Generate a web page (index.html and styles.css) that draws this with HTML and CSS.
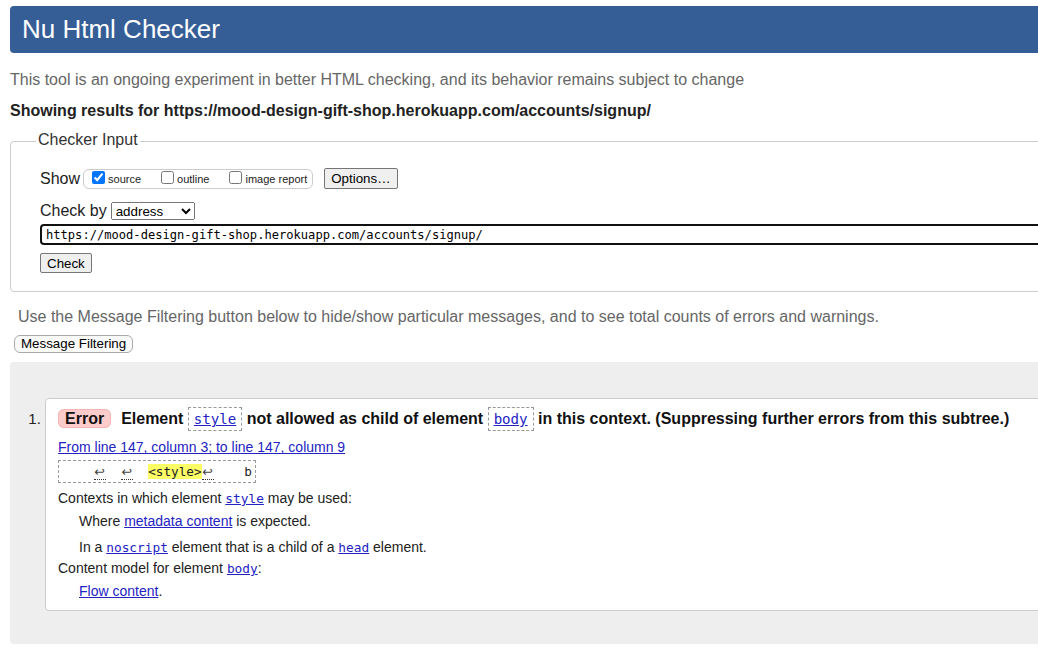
FILE: index.html
```html
<!DOCTYPE html>
<html lang="en">
<head>
<meta charset="utf-8">
<title>Showing results for https://mood-design-gift-shop.herokuapp.com/accounts/signup/ - Nu Html Checker</title>
<link rel="stylesheet" href="styles.css">
</head>
<body>
<div class="page">
  <header class="banner"><h1 class="title">Nu Html Checker</h1></header>
  <p class="intro">This tool is an ongoing experiment in better HTML checking, and its behavior remains subject to change</p>
  <p class="showing">Showing results for https://mood-design-gift-shop.herokuapp.com/accounts/signup/</p>
  <form class="checker-form">
    <fieldset class="checker">
      <legend class="checker-legend">Checker Input</legend>
      <div class="checker-body">
        <div class="show-row">
          <span class="row-label">Show</span>
          <span class="show-options">
            <label class="opt"><input type="checkbox" checked><span class="opt-text">source</span></label>
            <label class="opt"><input type="checkbox"><span class="opt-text">outline</span></label>
            <label class="opt"><input type="checkbox"><span class="opt-text">image report</span></label>
          </span>
          <button type="button" class="btn options-btn">Options…</button>
        </div>
        <div class="by-row">
          <span class="row-label">Check by</span>
          <select class="check-by"><option>address</option></select>
        </div>
        <input class="url" type="url" value="https://mood-design-gift-shop.herokuapp.com/accounts/signup/">
        <button type="button" class="btn check-btn">Check</button>
      </div>
    </fieldset>
  </form>
  <p class="hint">Use the Message Filtering button below to hide/show particular messages, and to see total counts of errors and warnings.</p>
  <div class="filter-wrap"><button type="button" class="filter-btn">Message Filtering</button></div>
  <div class="results">
    <ol class="messages">
      <li class="msg">
        <p class="msg-text"><span class="sev">Error</span>Element <code class="msg-code"><a href="#">style</a></code> not allowed as child of element <code class="msg-code"><a href="#">body</a></code> in this context. (Suppressing further errors from this subtree.)</p>
        <p class="loc"><a href="#">From line 147, column 3; to line 147, column 9</a></p>
        <code class="extract">    <span class="lf">↩</span>  <span class="lf">↩</span>  <b class="hl">&lt;style&gt;</b><span class="lf">↩</span>    b</code>
        <dl class="details">
          <dt>Contexts in which element <a href="#" class="code-link">style</a> may be used:</dt>
          <dd>Where <a href="#">metadata content</a> is expected.</dd>
          <dd>In a <a href="#" class="code-link">noscript</a> element that is a child of a <a href="#" class="code-link">head</a> element.</dd>
          <dt>Content model for element <a href="#" class="code-link">body</a>:</dt>
          <dd><a href="#">Flow content</a>.</dd>
        </dl>
      </li>
    </ol>
  </div>
</div>
</body>
</html>
```
FILE: styles.css
```css
* { box-sizing: border-box; }
html { overflow: hidden; }
body {
  margin: 0;
  font-family: "Liberation Sans", Arial, sans-serif;
  color: #222;
  background: #fff;
}
a { color: #2323c2; text-decoration: underline; }

.page { width: 1100px; padding: 6px 0 0 10px; }

.banner {
  height: 47px;
  background: #365e96;
  border-radius: 4px 0 0 4px;
  padding-left: 12px;
}
.title {
  margin: 0;
  font-size: 26px;
  font-weight: normal;
  line-height: 47px;
  color: #fff;
}

.intro { margin: 17px 0 0; font-size: 16px; line-height: 20px; color: #666; }
.showing { margin: 11px 0 0; font-size: 16px; line-height: 20px; font-weight: bold; color: #222; }

.checker-form { margin: 10px 0 0; }
.checker {
  margin: 0;
  min-width: 0;
  border: 1px solid #ccc;
  border-radius: 4px 0 0 4px;
  padding: 16.3px 0 17.5px 29px;
}
.checker-legend {
  margin-left: -4px;
  padding: 0 2px 3px;
  font-size: 16px;
  line-height: 18px;
  color: #333;
}
.checker-body { display: flex; flex-direction: column; align-items: flex-start; }

.row-label { font-size: 16px; line-height: 18px; color: #222; }
.show-row { display: flex; align-items: center; height: 21px; }
.show-options {
  display: inline-flex;
  align-items: flex-start;
  height: 20px;
  margin-left: 3px;
  padding: 1px 5px 0 4px;
  border: 1px solid #ccc;
  border-radius: 6px;
}
.opt { display: flex; align-items: flex-start; font-size: 11px; line-height: 13px; margin-right: 16px; color: #222; }
.opt:last-child { margin-right: 0; }
.opt input { margin: 0 3px 0 4px; width: 13px; height: 13px; }
.opt-text { padding-top: 2px; }

.btn {
  font-family: "Liberation Sans", Arial, sans-serif;
  font-size: 13.333px;
  line-height: 15px;
  color: #000;
  background: #efefef;
  border: 1px solid #767676;
  border-radius: 2px;
  padding: 0 6px;
}
.options-btn { margin-left: 11px; height: 21px; }

.by-row { display: flex; align-items: center; margin-top: 12.4px; height: 18px; }
.check-by {
  margin-left: 4px;
  width: 84px;
  height: 18px;
  font-family: "Liberation Sans", Arial, sans-serif;
  font-size: 13.333px;
  color: #000;
}

.url {
  align-self: stretch;
  margin-top: 4.5px;
  height: 21px;
  padding: 0 4px;
  border: 2px solid #111;
  border-radius: 4px 0 0 4px;
  font-family: "DejaVu Sans Mono", "Liberation Mono", monospace;
  font-size: 12.1px;
  color: #000;
  outline: none;
}
.check-btn { margin-top: 8px; height: 20px; }

.hint { margin: 15.5px 0 0 8px; font-size: 16px; line-height: 20px; color: #666; }
.filter-wrap { margin: 7px 0 0 4px; }
.filter-btn {
  height: 18px;
  padding: 0 6px;
  font-family: "Liberation Sans", Arial, sans-serif;
  font-size: 13.333px;
  line-height: 15px;
  color: #000;
  background: #fafafa;
  border: 1px solid #aaa;
  border-radius: 6px;
}

.results {
  margin-top: 9.4px;
  background: #eee;
  border-radius: 4px 0 0 4px;
  padding: 35.6px 0 33px 35px;
}
.messages { margin: 0; padding: 0; list-style: decimal outside; }
.msg {
  font-size: 16px;
  color: #222;
  background: #fff;
  border: 1px solid #ccc;
  border-radius: 4px 0 0 4px;
  padding: 10.7px 0 10px 12px;
}
.msg::marker { font-size: 15px; }
.msg-text { margin: 0; font-size: 16px; line-height: 20px; font-weight: bold; color: #111; }
.sev {
  margin-right: 10px;
  padding: 0 6px;
  background: #fcc;
  border: 1px solid #f4b4b4;
  border-radius: 6px;
}
.msg-code {
  font-family: "DejaVu Sans Mono", "Liberation Mono", monospace;
  font-size: 14.1px;
  font-weight: normal;
  padding: 3px 5px;
  border: 1px dashed #999;
}

.loc { margin: 9px 0 0; font-size: 14px; line-height: 18px; }

.extract {
  display: block;
  width: fit-content;
  margin-top: 4px;
  padding: 0 3px 0 4px;
  border: 1px dashed #999;
  font-family: "DejaVu Sans Mono", "Liberation Mono", monospace;
  font-size: 12.7px;
  line-height: 21px;
  white-space: pre;
  color: #222;
}
.hl { font-weight: normal; background: #ff6; }
.lf {
  display: inline-block;
  width: 12px;
  height: 17px;
  line-height: 17px;
  text-align: center;
  font-family: "DejaVu Sans", sans-serif;
  color: #444;
  border-bottom: 1px dotted #333;
}

.details { margin: 6px 0 0; font-size: 14px; line-height: 18px; color: #222; }
.details dt { font-weight: normal; }
.details dd { margin: 0 0 0 21px; }
.details dt + dd { margin-top: 4px; }
.details dd + dd { margin-top: 8px; }
.details dd + dt { margin-top: 2px; }
.code-link { font-family: "DejaVu Sans Mono", "Liberation Mono", monospace; font-size: 12.8px; }
```
